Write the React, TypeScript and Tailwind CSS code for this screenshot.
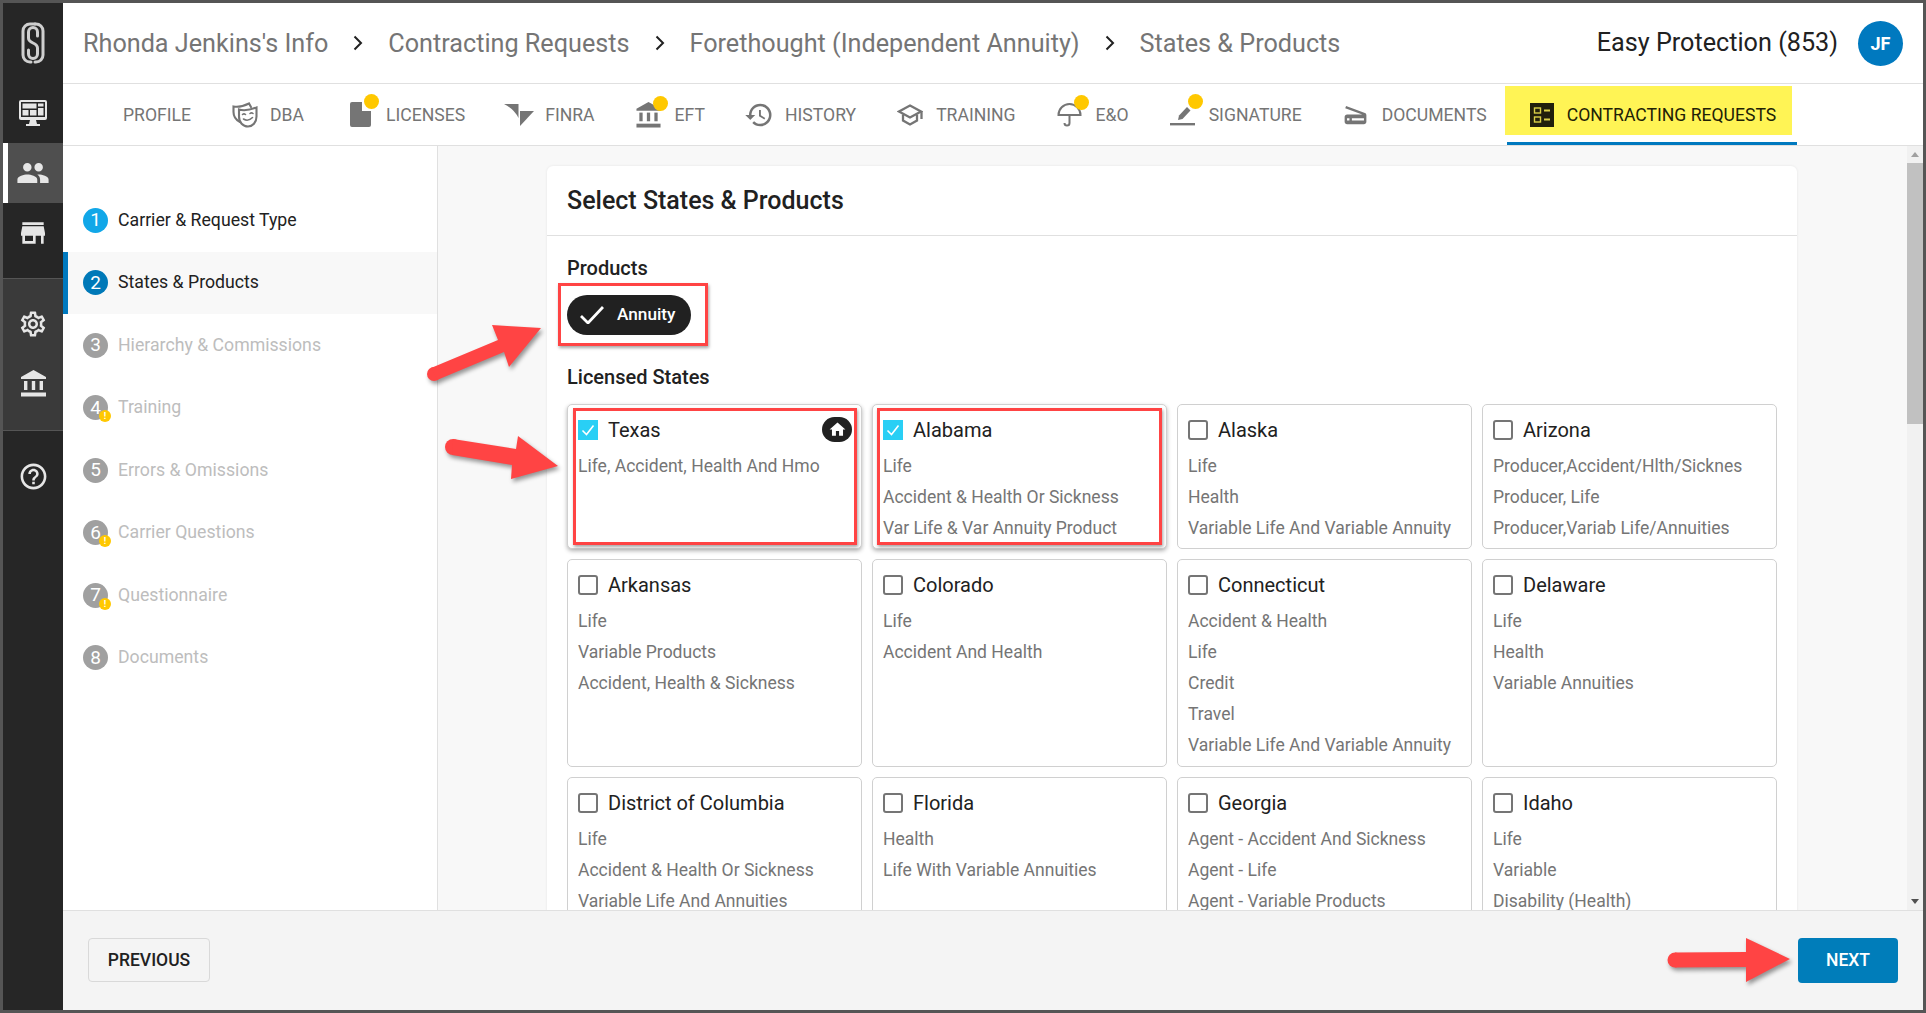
import React from 'react';
import { MdPeople, MdStore, MdOutlineSettings, MdHelpOutline, MdHistory, MdScanner, MdHome } from 'react-icons/md';

const BankIcon = ({ className }: { className?: string }) => (
  <svg viewBox="0 0 25 27" className={className} fill="currentColor">
    <path d="M12.5 0 25 7v2H0V7z" />
    <rect x="3" y="11" width="3.4" height="9" />
    <rect x="10.8" y="11" width="3.4" height="9" />
    <rect x="18.6" y="11" width="3.4" height="9" />
    <rect x="0" y="22.5" width="25" height="4" />
  </svg>
);

const Logo = () => (
  <svg viewBox="0 0 24 42" className="w-[24px] h-[42px]" fill="none" stroke="#cfcfcf" strokeWidth="3" strokeLinecap="round">
    <path d="M14 2H9a7 7 0 0 0-7 7v24a7 7 0 0 0 7 7h1" />
    <path d="M14 40h1a7 7 0 0 0 7-7V9a7 7 0 0 0-7-7h-1" />
    <path d="M16.5 14v-4a4.5 4.5 0 0 0-9 0v6q0 3 4.5 5t4.5 5v6a4.5 4.5 0 0 1-9 0v-4" />
  </svg>
);

const MonitorIcon = () => (
  <svg viewBox="0 0 28 26" className="w-[28px] h-[26px]">
    <rect width="28" height="20" rx="2" fill="#e6e6e6" />
    <rect x="2" y="2" width="24" height="15" fill="#262626" />
    <rect x="3.5" y="3.5" width="14" height="5" fill="#e6e6e6" />
    <rect x="3.5" y="10" width="6" height="5.5" fill="#e6e6e6" />
    <rect x="11" y="10" width="6.5" height="5.5" fill="#e6e6e6" />
    <rect x="19" y="3.5" width="5.5" height="3" fill="#e6e6e6" />
    <rect x="19" y="8" width="5.5" height="7.5" fill="#e6e6e6" />
    <path d="M11 20h6l1 4h3v2H7v-2h3z" fill="#e6e6e6" />
  </svg>
);

const MaskIcon = () => (
  <svg viewBox="0 0 26 26" className="w-[26px] h-[26px]" fill="none" stroke="#757575" strokeWidth="2.1" strokeLinecap="round">
    <path d="M8 20C4 18 1.5 14 1.5 10V4.5C7 5.5 12 4 17 1.5l2 3.5" />
    <path d="M7 7.5c5 1.5 11 .5 17.5-2V14.5c0 6-4 10-8.5 10C11 24.5 7 20.5 7 14.5z" />
    <path d="M10.5 12.5q1.5-1.2 3 0M18 11.5q1.5-1.2 3 0" strokeWidth="1.6" />
    <path d="M11.5 17q4.5 3 9-1.5" strokeWidth="1.6" />
  </svg>
);

const LicenseIcon = () => (
  <svg viewBox="0 0 21 25" className="w-[21px] h-[25px]" fill="#757575">
    <path d="M2 0h10v9h9v14a2 2 0 0 1-2 2H2a2 2 0 0 1-2-2V2a2 2 0 0 1 2-2z" />
  </svg>
);

const FinraIcon = () => (
  <svg viewBox="0 0 30 22" className="w-[30px] h-[22px]" fill="#757575">
    <path d="M0 0h14.5v14Q10 5 0 0z" />
    <path d="M16 7h14L16 22z" />
  </svg>
);

const TrainingIcon = () => (
  <svg viewBox="0 0 26 22" className="w-[26px] h-[22px]" fill="none" stroke="#757575" strokeWidth="2.3">
    <path d="M13 1.5 24 7.5 13 13.5 2 7.5z" />
    <path d="M6 10.5v6l7 4 7-4v-6" />
    <path d="M24.5 7.5v7.5" />
  </svg>
);

const UmbrellaIcon = () => (
  <svg viewBox="0 0 25 25" className="w-[25px] h-[25px]" fill="none" stroke="#757575" strokeWidth="2">
    <path d="M1.5 13a11 11 0 0 1 22 0z" />
    <path d="M12.5 13v8a2.5 2.5 0 0 1-5 0" />
  </svg>
);

const SignatureIcon = () => (
  <svg viewBox="0 0 25 25" className="w-[25px] h-[25px]" fill="#757575">
    <rect x="0" y="21" width="25" height="2.4" />
    <path d="M8 18l1-4.5L17 5l3.5 3.5L12.5 17z" />
  </svg>
);

const ContractingIcon = () => (
  <svg viewBox="0 0 24 24" className="w-[24px] h-[24px]">
    <rect width="24" height="24" fill="#211f0c" />
    <rect x="4.5" y="5" width="6" height="5" fill="none" stroke="#d9cf48" strokeWidth="1.4" />
    <rect x="4.5" y="14" width="6" height="5" fill="none" stroke="#d9cf48" strokeWidth="1.4" />
    <rect x="14" y="6.5" width="6" height="2" fill="#d9cf48" />
    <rect x="14" y="15.5" width="6" height="2" fill="#d9cf48" />
  </svg>
);

const Chevron = () => (
  <svg viewBox="0 0 10 16" className="w-[10px] h-[16px] mx-[25px] -mt-[2px] shrink-0" fill="none" stroke="#212121" strokeWidth="2">
    <path d="M1.5 1.5 8 8l-6.5 6.5" />
  </svg>
);

const Dot = ({ className }: { className: string }) => (
  <span className={`absolute w-[15px] h-[15px] rounded-full bg-[#ffc800] ${className}`} />
);

const tabs = [
  { label: 'DBA', cls: 'gap-[12px] -ml-[1px]', icon: <MaskIcon /> },
  { label: 'LICENSES', cls: 'gap-[15px] ml-[4px]', icon: <LicenseIcon />, dot: '-top-[8px] left-[14px]' },
  { label: 'FINRA', cls: 'gap-[11px] -ml-[3px]', icon: <FinraIcon /> },
  { label: 'EFT', cls: 'gap-[14px] -ml-[1px]', icon: <BankIcon className="w-[25px] h-[26px] text-[#757575]" />, dot: '-top-[6px] left-[17px]' },
  { label: 'HISTORY', cls: 'gap-[13px] -ml-[1px]', icon: <MdHistory size={30} className="shrink-0 -mx-[2px]" color="#757575" /> },
  { label: 'TRAINING', cls: 'gap-[13px] -ml-[1px]', icon: <TrainingIcon /> },
  { label: 'E&O', cls: 'gap-[14px] -ml-[1px]', icon: <UmbrellaIcon />, dot: '-top-[7px] left-[17px]' },
  { label: 'SIGNATURE', cls: 'gap-[14px] -ml-[1px]', icon: <SignatureIcon />, dot: '-top-[8px] left-[18px]' },
  { label: 'DOCUMENTS', cls: 'gap-[15px] ml-[1px]', icon: <MdScanner size={29} className="shrink-0 -mx-[3.5px]" color="#757575" /> },
];

const steps = [
  { n: 1, label: 'Carrier & Request Type', state: 'done' },
  { n: 2, label: 'States & Products', state: 'active' },
  { n: 3, label: 'Hierarchy & Commissions' },
  { n: 4, label: 'Training', warn: true },
  { n: 5, label: 'Errors & Omissions' },
  { n: 6, label: 'Carrier Questions', warn: true },
  { n: 7, label: 'Questionnaire', warn: true },
  { n: 8, label: 'Documents' },
];

const states = [
  { name: 'Texas', lines: ['Life, Accident, Health And Hmo'], checked: true, home: true, box: 'left-[5px] right-[4px]' },
  { name: 'Alabama', lines: ['Life', 'Accident & Health Or Sickness', 'Var Life & Var Annuity Product'], checked: true, box: 'left-[4px] right-[4px]' },
  { name: 'Alaska', lines: ['Life', 'Health', 'Variable Life And Variable Annuity'] },
  { name: 'Arizona', lines: ['Producer,Accident/Hlth/Sicknes', 'Producer, Life', 'Producer,Variab Life/Annuities'] },
  { name: 'Arkansas', lines: ['Life', 'Variable Products', 'Accident, Health & Sickness'] },
  { name: 'Colorado', lines: ['Life', 'Accident And Health'] },
  { name: 'Connecticut', lines: ['Accident & Health', 'Life', 'Credit', 'Travel', 'Variable Life And Variable Annuity'] },
  { name: 'Delaware', lines: ['Life', 'Health', 'Variable Annuities'] },
  { name: 'District of Columbia', lines: ['Life', 'Accident & Health Or Sickness', 'Variable Life And Annuities'] },
  { name: 'Florida', lines: ['Health', 'Life With Variable Annuities'] },
  { name: 'Georgia', lines: ['Agent - Accident And Sickness', 'Agent - Life', 'Agent - Variable Products'] },
  { name: 'Idaho', lines: ['Life', 'Variable', 'Disability (Health)'] },
];

const SideItem = ({ children, active }: { children: React.ReactNode; active?: boolean }) => (
  <div className={`h-[60px] flex items-center justify-center ${active ? 'bg-[#4f4f4f] border-l-[5px] border-white pr-[5px]' : ''}`}>
    {children}
  </div>
);

const Sidebar = () => (
  <div className="w-[60px] shrink-0 flex flex-col bg-[#262626] text-[#e6e6e6]">
    <div className="h-[275px] shrink-0">
      <div className="h-[80px] flex items-center justify-center"><Logo /></div>
      <SideItem><MonitorIcon /></SideItem>
      <SideItem active><MdPeople size={34} className="shrink-0" /></SideItem>
      <SideItem><MdStore size={32} className="shrink-0" /></SideItem>
    </div>
    <div className="h-[153px] shrink-0 bg-[#3a3a3a] border-y border-[#555] pt-[14px]">
      <SideItem><MdOutlineSettings size={30} className="shrink-0 mt-[2px]" /></SideItem>
      <SideItem><BankIcon className="w-[25px] h-[27px]" /></SideItem>
    </div>
    <div className="pt-[15px]">
      <SideItem><MdHelpOutline size={31} className="shrink-0" /></SideItem>
    </div>
  </div>
);

const Header = () => (
  <div className="h-[81px] shrink-0 border-b border-[#e0e0e0] flex items-center pt-[2px] pl-[20px] pr-[20px] text-[25.2px] text-[#757575]">
    <span>Rhonda Jenkins's Info</span>
    <Chevron />
    <span>Contracting Requests</span>
    <Chevron />
    <span>Forethought (Independent Annuity)</span>
    <Chevron />
    <span>States &amp; Products</span>
    <span className="ml-auto text-[#212121] -mt-[3px]">Easy Protection (853)</span>
    <span className="ml-[20px] -mt-[2px] w-[45px] h-[45px] rounded-full bg-[#0079bf] text-white text-[18px] font-bold flex items-center justify-center">JF</span>
  </div>
);

const TabBar = () => (
  <div className="h-[62px] shrink-0 border-b border-[#e0e0e0] flex items-stretch pt-[2px] pl-[39px] text-[17.6px] text-[#757575]">
    <div className="flex items-center px-[21px]">PROFILE</div>
    {tabs.map((t) => (
      <div key={t.label} className={`flex items-center px-[21px] ${t.cls}`}>
        <span className="relative flex items-center shrink-0 -mt-[2px]">
          {t.icon}
          {t.dot && <Dot className={t.dot} />}
        </span>
        <span>{t.label}</span>
      </div>
    ))}
    <div className="relative -ml-[1px] w-[290px] flex items-center gap-[13px] pt-[3px] pl-[23px] text-[#212106] border-b-[3px] border-[#0079bf]">
      <span className="absolute -left-[2px] right-[5px] top-0 h-[49px] bg-[#fff455]" />
      <span className="relative shrink-0 -mt-[2px]"><ContractingIcon /></span>
      <span className="relative">CONTRACTING REQUESTS</span>
    </div>
  </div>
);

const StepList = () => (
  <div className="w-[375px] shrink-0 bg-white border-r border-[#e0e0e0] pt-[43px] text-[17.7px]">
    {steps.map((s) => (
      <div
        key={s.n}
        className={`h-[62.5px] flex items-center gap-[10px] ${s.state === 'active' ? 'bg-[#f8f8f8] border-l-[5px] border-[#0079bf] pl-[15px]' : 'pl-[20px]'}`}
      >
        <span
          className={`relative w-[25px] h-[25px] rounded-full flex items-center justify-center text-white text-[19px] shrink-0 ${
            s.state === 'done' ? 'bg-[#11a7e8]' : s.state === 'active' ? 'bg-[#0079b8]' : 'bg-[#a0a0a0]'
          }`}
        >
          {s.n}
          {s.warn && (
            <span className="absolute left-[16px] top-[15px] w-[12px] h-[12px] rounded-full bg-[#ffc800] text-white text-[9px] font-bold leading-[12px] text-center">!</span>
          )}
        </span>
        <span className={s.state ? 'text-[#212121]' : 'text-[#bdbdbd]'}>{s.label}</span>
      </div>
    ))}
  </div>
);

const Checkbox = ({ checked }: { checked?: boolean }) =>
  checked ? (
    <span className="w-[20px] h-[20px] bg-[#29cff5] flex items-center justify-center shrink-0">
      <svg viewBox="0 0 20 20" className="w-[20px] h-[20px]" fill="none" stroke="white" strokeWidth="1.6">
        <path d="M4.5 10.5 8.5 14.5 15.5 5.5" />
      </svg>
    </span>
  ) : (
    <span className="w-[20px] h-[20px] border-2 border-[#757575] rounded-[3px] shrink-0" />
  );

const StateCard = ({ s }: { s: (typeof states)[number] }) => (
  <div className={`relative border border-[#d0d0d0] rounded-[5px] bg-white px-[10px] pt-[11px] ${s.checked ? 'shadow-[0_2px_4px_rgba(0,0,0,0.3)]' : ''}`}>
    <div className="h-[28px] flex items-center gap-[10px] text-[20px] text-[#212121]">
      <Checkbox checked={s.checked} />
      <span>{s.name}</span>
      {s.home && (
        <span className="ml-auto -mr-[1px] -mt-[2px] w-[30px] h-[25px] rounded-full bg-[#212121] flex items-center justify-center">
          <MdHome size={19} color="white" />
        </span>
      )}
    </div>
    <div className="mt-[7px] text-[17.55px] text-[#757575]">
      {s.lines.map((l) => (
        <div key={l} className="h-[31px] leading-[31px] whitespace-nowrap">{l}</div>
      ))}
    </div>
    {s.box && (
      <div className={`absolute top-[3px] bottom-[3px] border-[3px] border-[#ff4444] shadow-[1px_2px_3px_rgba(0,0,0,0.35)] ${s.box}`} />
    )}
  </div>
);

const ContentCard = () => (
  <div className="mt-[20px] ml-[109px] w-[1250px] h-[800px] shrink-0 bg-white rounded-t-[6px] shadow-[0_0_3px_rgba(0,0,0,0.08)]">
    <div className="h-[70px] border-b border-[#e0e0e0] flex items-center px-[20px] text-[25px] font-medium text-[#212121]">
      Select States &amp; Products
    </div>
    <div className="px-[20px] pt-[20px]">
      <div className="text-[20px] leading-[24px] font-medium text-[#212121]">Products</div>
      <div className="relative w-fit mt-[15px]">
        <div className="w-[124px] h-[40px] rounded-full bg-[#212121] text-white text-[17.2px] font-medium flex items-center pl-[13px] gap-[13px]">
          <svg viewBox="0 0 24 18" className="w-[24px] h-[18px]" fill="none" stroke="white" strokeWidth="2.8">
            <path d="M1 10l7 7L23 1" />
          </svg>
          Annuity
        </div>
        <div className="absolute -left-[9px] -right-[17px] -top-[12px] -bottom-[11px] border-[3px] border-[#ff4444] shadow-[1px_2px_3px_rgba(0,0,0,0.35)]" />
      </div>
      <div className="mt-[30px] text-[20px] leading-[24px] font-medium text-[#212121]">Licensed States</div>
      <div className="mt-[15px] grid grid-cols-4 grid-rows-[145px_208px_208px] gap-x-[10px] gap-y-[10px]">
        {states.map((s) => (
          <StateCard key={s.name} s={s} />
        ))}
      </div>
    </div>
  </div>
);

const ScrollBar = () => (
  <div className="w-[16px] shrink-0 bg-[#f1f1f1] flex flex-col items-center">
    <div className="h-[17px] shrink-0 flex items-center justify-center">
      <span className="w-0 h-0 border-x-[4px] border-x-transparent border-b-[5px] border-b-[#a0a0a0]" />
    </div>
    <div className="h-[261px] w-full shrink-0 bg-[#c1c1c1]" />
    <div className="flex-1" />
    <div className="h-[17px] shrink-0 flex items-center justify-center">
      <span className="w-0 h-0 border-x-[4px] border-x-transparent border-t-[5px] border-t-[#505050]" />
    </div>
  </div>
);

const Footer = () => (
  <div className="h-[100px] shrink-0 bg-[#f4f4f4] border-t border-[#e0e0e0] flex items-center justify-between pl-[25px] pr-[25px] text-[17.5px]">
    <button className="w-[122px] h-[44px] -mt-[1px] border border-[#d9d9d9] rounded-[4px] text-[#212121] font-medium">PREVIOUS</button>
    <button className="w-[100px] h-[45px] -mt-[1px] bg-[#007dba] rounded-[4px] text-white font-medium">NEXT</button>
  </div>
);

// red callout arrows drawn over the page, coordinates are page pixels
const Arrows = () => (
  <svg viewBox="0 0 1926 1013" className="absolute left-0 top-0 w-[1926px] h-[1013px] pointer-events-none drop-shadow-[2px_3px_2px_rgba(0,0,0,0.4)]" fill="#ff4444">
    <circle cx="434" cy="374" r="7" />
    <path d="M431 368 498 340 492 325 541 328 509 367 504 352 437 380z" />
    <circle cx="453" cy="447" r="8" />
    <path d="M453 439 516 449 518 436 558 466 511 479 512 465 452 455z" />
    <circle cx="1675" cy="960" r="7.5" />
    <path d="M1675 952.5 1746 952 1746 938 1790 959 1746 982 1746 967 1675 967.5z" />
  </svg>
);

export default function App() {
  return (
    <div className="relative w-[1926px] h-[1013px] border-[3px] border-[#555] bg-white flex overflow-hidden font-['Roboto',sans-serif]">
      <Sidebar />
      <div className="flex-1 min-w-0 flex flex-col">
        <Header />
        <TabBar />
        <div className="flex-1 min-h-0 flex overflow-hidden">
          <StepList />
          <div className="flex-1 min-w-0 bg-[#f8f8f8] flex overflow-hidden">
            <div className="flex-1 min-w-0 overflow-hidden"><ContentCard /></div>
            <ScrollBar />
          </div>
        </div>
        <Footer />
      </div>
      <div className="absolute -left-[3px] -top-[3px]"><Arrows /></div>
    </div>
  );
}
